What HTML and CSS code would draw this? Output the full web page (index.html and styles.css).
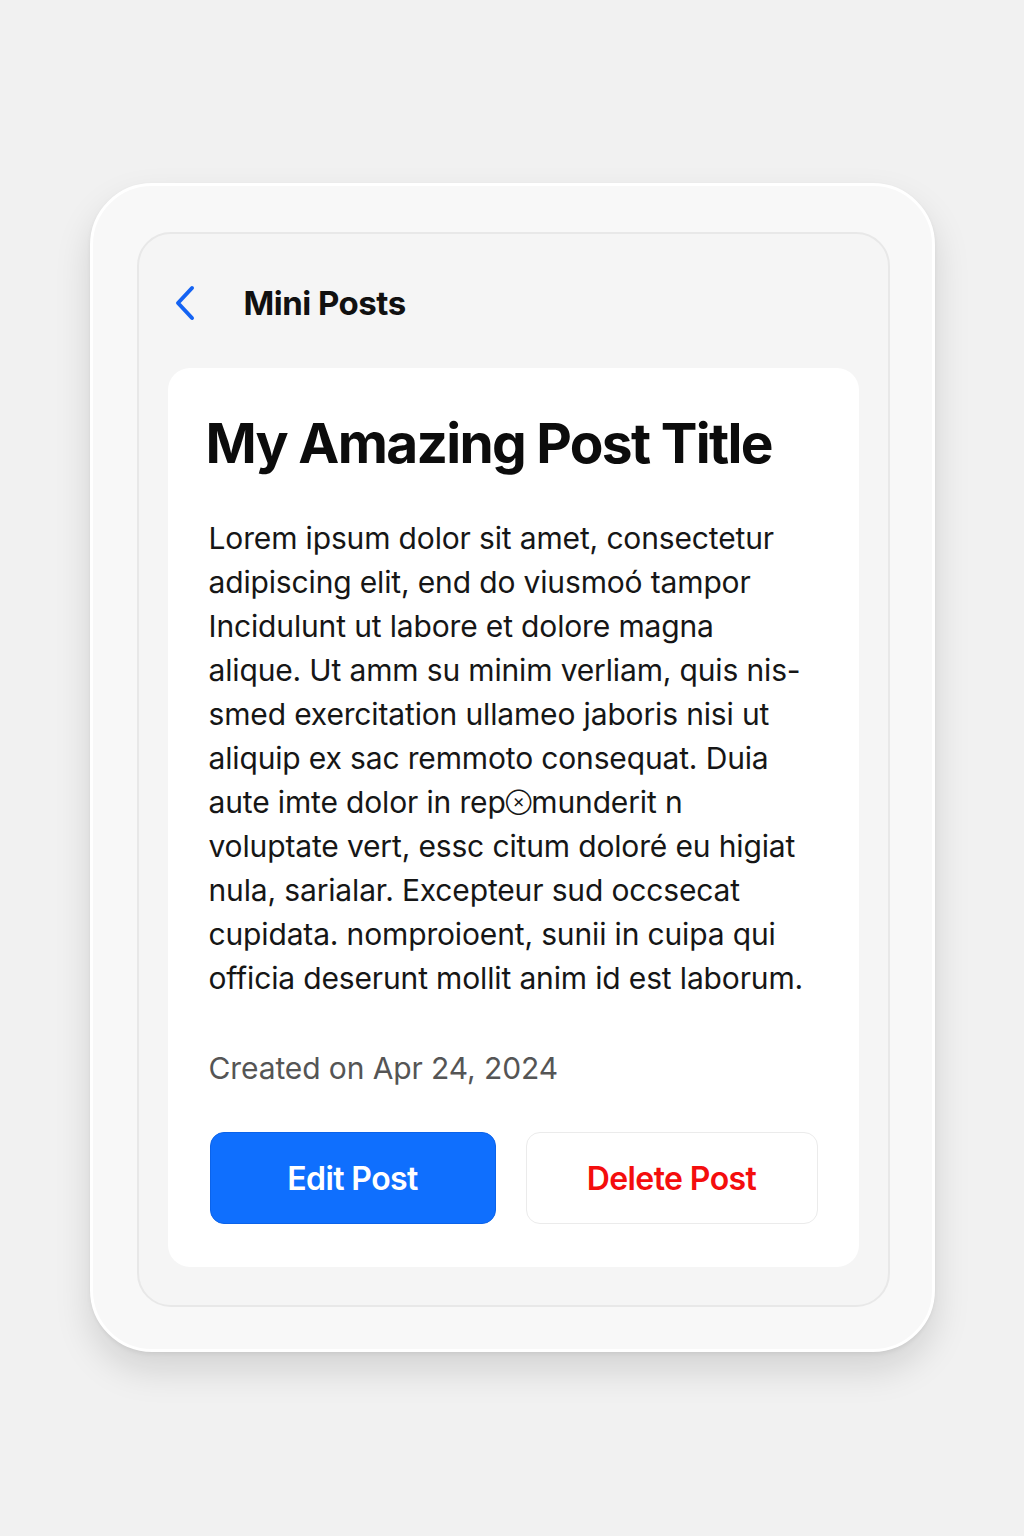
FILE: index.html
```html
<!DOCTYPE html>
<html lang="en">
<head>
<meta charset="utf-8">
<title>Mini Posts</title>
<link rel="stylesheet" href="styles.css">
</head>
<body>
<div class="device">
  <div class="panel">
    <header class="nav">
      <button class="back" aria-label="Back">
        <svg width="26" height="36" viewBox="0 0 26 36" fill="none">
          <path d="M20 3 L6 18 L20 33" stroke="#1463f3" stroke-width="4" stroke-linecap="round" stroke-linejoin="round"/>
        </svg>
      </button>
      <h1 class="nav-title">Mini Posts</h1>
    </header>
    <article class="card">
      <h2 class="post-title">My Amazing Post Title</h2>
      <p class="post-body">Lorem ipsum dolor sit amet, consectetur<br>adipiscing elit, end do viusmoó tampor<br>Incidulunt ut labore et dolore magna<br>alique. Ut amm su minim verliam, quis nis-<br>smed exercitation ullameo jaboris nisi ut<br>aliquip ex sac remmoto consequat. Duia<br>aute imte dolor in rep<span class="glitch">&#8855;</span>munderit n<br>voluptate vert, essc citum doloré eu higiat<br>nula, sarialar. Excepteur sud occsecat<br>cupidata. nomproioent, sunii in cuipa qui<br>officia deserunt mollit anim id est laborum.</p>
      <p class="post-date">Created on Apr 24, 2024</p>
      <div class="actions">
        <button class="btn btn-edit">Edit Post</button>
        <button class="btn btn-delete">Delete Post</button>
      </div>
    </article>
  </div>
</div>
</body>
</html>
```
FILE: styles.css
```css
* { box-sizing: border-box; }
html, body { margin: 0; padding: 0; }
body {
  background: #f1f1f1;
  font-family: Inter, "Liberation Sans", sans-serif;
  color: #111;
  min-height: 1536px;
  display: flex;
  justify-content: center;
  padding-top: 183px;
}
.device {
  width: 845px;
  height: 1169px;
  border-radius: 62px;
  background: #f8f8f8;
  border: 3px solid #fff;
  box-shadow: 0 18px 36px rgba(0,0,0,0.13), 0 2px 4px rgba(0,0,0,0.06);
  padding: 46px 44px;
}
.panel {
  width: 753px;
  height: 1075px;
  border-radius: 34px;
  background: #f5f5f5;
  border: 2px solid #e8e8e8;
  padding: 0 29px;
  display: flex;
  flex-direction: column;
}
.nav {
  height: 134px;
  display: flex;
  align-items: center;
  padding-top: 4px;
}
.back {
  border: 0;
  background: none;
  padding: 0;
  margin-left: 4px;
  width: 26px;
  height: 36px;
  display: flex;
}
.nav-title {
  margin: 0 0 0 46px;
  font-size: 33px;
  font-weight: 700;
  letter-spacing: -0.5px;
  color: #111;
}
.card {
  background: #fff;
  border-radius: 22px;
  height: 899px;
  padding: 39px 42px 0 38px;
  display: flex;
  flex-direction: column;
}
.post-title {
  margin: 0;
  font-size: 55px;
  line-height: 72px;
  font-weight: 700;
  letter-spacing: -1.7px;
  color: #0c0c0c;
}
.post-body {
  margin: 37px 0 0 3px;
  font-size: 30px;
  line-height: 44px;
  letter-spacing: -0.15px;
  color: #161616;
  white-space: nowrap;
}
.glitch {
  font-size: 0.62em;
  vertical-align: 0.2em;
}
.post-date {
  margin: 46px 0 0 3px;
  font-size: 30px;
  line-height: 44px;
  letter-spacing: -0.1px;
  color: #555;
}
.actions {
  margin-top: 42px;
  display: grid;
  grid-template-columns: 286px 292px;
  gap: 30px;
  padding-left: 4px;
}
.btn {
  height: 92px;
  border-radius: 14px;
  font-family: inherit;
  font-size: 32px;
  font-weight: 600;
  letter-spacing: -0.6px;
  cursor: pointer;
}
.btn-edit {
  background: #0f6ffe;
  color: #fff;
  border: 1px solid #0b63ea;
}
.btn-delete {
  background: #fff;
  color: #f40d0d;
  border: 1.5px solid #ebebeb;
}
```
